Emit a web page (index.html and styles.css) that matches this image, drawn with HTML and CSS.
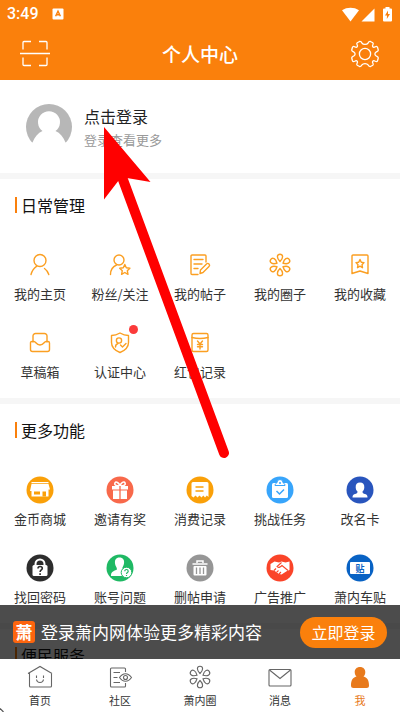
FILE: index.html
```html
<!DOCTYPE html>
<html lang="zh-CN">
<head>
<meta charset="utf-8">
<meta name="viewport" content="width=device-width, initial-scale=1">
<title>个人中心</title>
<link rel="stylesheet" href="styles.css">
</head>
<body>
<svg class="defs" aria-hidden="true">
  <symbol id="flower" viewBox="-14 -14 28 28">
    <path id="petal" d="M0-3.500C-1.700-5.200-2.600-6.800-2.600-8.200A2.600 2.600 0 0 1 2.600-8.200C2.600-6.800 1.700-5.200 0-3.500Z"/>
    <use href="#petal" transform="rotate(60)"/>
    <use href="#petal" transform="rotate(120)"/>
    <use href="#petal" transform="rotate(180)"/>
    <use href="#petal" transform="rotate(240)"/>
    <use href="#petal" transform="rotate(300)"/>
  </symbol>
</svg>
<div class="app">
  <header class="top">
    <div class="status">
      <span class="clock">3:49</span>
      <svg class="badge-a" viewBox="0 0 12 12"><rect x="0.5" y="0.5" width="11" height="11" rx="1" fill="#fff"/><path d="M3.6 8.3 6 3.2 8.4 8.3M4.5 6.8H7.5" fill="none" stroke="#fa800c" stroke-width="1.4"/></svg>
      <svg class="signals" viewBox="0 0 52 18">
        <path d="M1 5.300C6 2 13 2 18 5.300L9.500 16.500Z" fill="#fff"/>
        <path d="M33.500 3.500V16.500H20.500Z" fill="#fff"/>
        <path d="M44.500 3.500V2H48.500V3.500H50A1 1 0 0 1 51 4.500V15.500A1 1 0 0 1 50 16.500H43A1 1 0 0 1 42 15.500V4.500A1 1 0 0 1 43 3.500Z" fill="#fff"/>
        <path d="M47 5.500 44 10.500H46L45.800 14 49 9H47Z" fill="#fa800c"/>
      </svg>
    </div>
    <div class="bar">
      <button class="icon-btn" aria-label="扫一扫"><svg viewBox="0 0 30 30"><path d="M3 11V4A1 1 0 0 1 4 3H11M19 3H26A1 1 0 0 1 27 4V11M27 19V26A1 1 0 0 1 26 27H19M11 27H4A1 1 0 0 1 3 26V19M0 15H30" transform="translate(0 -.5)"/></svg></button>
      <h1>个人中心</h1>
      <button class="icon-btn" aria-label="设置"><svg viewBox="-15 -15 30 30"><circle r="5.600"/><path d="M-3-10.800C-3.500-12-4-12.800-5.500-12.500L-7.800-11.300C-9-10.300-7.600-9.300-7.500-8.200C-7.500-7-8-6.500-9.500-6.900C-11-7.600-12-8.200-12.600-6.500L-13.300-3.900C-13.300-2.500-12-2.600-10.900-1.800C-9.600-.8-9.600.8-10.900 1.800C-12 2.600-13.300 2.500-13.300 3.900L-12.600 6.500C-12 8.200-11 7.600-9.500 6.900C-8 6.500-7.500 7-7.500 8.200C-7.600 9.300-9 10.300-7.800 11.300L-5.500 12.500C-4 12.800-3.500 12-3 10.800C-2 9.200 2 9.200 3 10.800C3.500 12 4 12.800 5.500 12.500L7.800 11.300C9 10.300 7.600 9.300 7.500 8.200C7.500 7 8 6.500 9.500 6.900C11 7.600 12 8.200 12.600 6.500L13.300 3.900C13.300 2.500 12 2.600 10.900 1.800C9.600.8 9.600-.8 10.900-1.800C12-2.600 13.300-2.500 13.300-3.900L12.600-6.500C12-8.200 11-7.600 9.500-6.900C8-6.500 7.500-7 7.500-8.200C7.600-9.300 9-10.300 7.800-11.300L5.500-12.500C4-12.800 3.500-12 3-10.800C2-9.200-2-9.200-3-10.800Z"/></svg></button>
    </div>
  </header>

  <main>
    <a class="profile" href="#login">
      <svg class="avatar" viewBox="0 0 46 46"><circle cx="23" cy="23" r="23" fill="#b7b7b7"/><path d="M0 46V38.500H6.500C8.500 33 12 29 16.500 27A11 11 0 1 1 29.500 27C34 29 37.500 33 39.500 38.500H46V46Z" fill="#fff"/></svg>
      <span class="who"><span class="name">点击登录</span><span class="hint">登录查看更多</span></span>
    </a>

    <section>
      <h2>日常管理</h2>
      <nav class="grid line">
        <a href="#home"><svg viewBox="0 0 28 28"><circle cx="14" cy="9.500" r="6"/><path d="M5 23.500C6 19.500 8 17 10.500 15.300M18.500 17.500C20.700 19 22 21 22.800 23.500"/></svg>我的主页</a>
        <a href="#fans"><svg viewBox="0 0 28 28"><circle cx="13" cy="9" r="5"/><path d="M4.500 23.500C4.500 19 7 15.500 10.500 14M18.800 13.500 20.300 16.800 23.900 17.200 21.300 19.700 22 23.300 18.800 21.500 15.600 23.300 16.300 19.700 13.700 17.200 17.300 16.800Z"/></svg>粉丝/关注</a>
        <a href="#posts"><svg viewBox="0 0 28 28"><path d="M12 23.500H6A1 1 0 0 1 5 22.500V5A1 1 0 0 1 6 4H19A1 1 0 0 1 20 5V11M8 8.500H17M8 13H16M8 17.500H12M14 22.500 14.500 19 20.500 13A1.500 1.500 0 0 1 23 15.500L17 21.500Z"/></svg>我的帖子</a>
        <a href="#circle"><svg><use href="#flower"/></svg>我的圈子</a>
        <a href="#saved"><svg viewBox="0 0 28 28"><path d="M7 4H21A1 1 0 0 1 22 5V22.500L14 20 6 22.500V5A1 1 0 0 1 7 4ZM14 8.500 15.300 11.300 18 11.600 16 13.700 16.500 16.700 14 15.200 11.500 16.700 12 13.700 10 11.600 12.700 11.300Z"/></svg>我的收藏</a>
        <a href="#drafts"><svg viewBox="0 0 28 28"><path d="M7 13V7A2.500 2.500 0 0 1 9.500 4.500H18.500A2.500 2.500 0 0 1 21 7V13M4.500 13.500Q4.500 12.500 6 12.500H8C10 12.500 10 16 14 16S18 12.500 20 12.500H22Q23.500 12.500 23.500 14V20.500A2 2 0 0 1 21.500 22.500H6.500A2 2 0 0 1 4.500 20.500Z"/></svg>草稿箱</a>
        <a href="#verify"><svg viewBox="0 0 28 28"><path d="M14 4C16.500 5.500 19 6.500 22.500 6.500V13.500C22.500 18 19 21.500 14 23.500C9 21.500 5.500 18 5.500 13.500V6.500C9 6.500 11.500 5.500 14 4Z"/><circle cx="13" cy="11.500" r="2.600"/><path d="M9.500 18C9.500 16.200 10.500 15 12 14.500M14.500 16 16.500 18 20 14.500"/></svg><i class="dot"></i>认证中心</a>
        <a href="#redpack"><svg viewBox="0 0 28 28"><rect x="6" y="4.500" width="16" height="18" rx="1.500"/><path d="M6 8.500Q14 10.500 22 8.500M11.500 12 14 15 16.500 12M14 15V20M11.500 15.500H16.500M11.500 17.800H16.500"/></svg>红包记录</a>
      </nav>
    </section>

    <section>
      <h2>更多功能</h2>
      <nav class="grid">
        <a href="#shop"><svg viewBox="0 0 28 28"><circle cx="14" cy="14" r="13.500" fill="#faa009"/><path d="M5.500 6H22.500V7.200H5.500ZM5.500 8H22.500L24 13.500H22.500V20.500H5.500V15H4Z" fill="#fff"/><path d="M8 15.500H14V18.500H8ZM16.500 15.500H20V20.500H16.500Z" fill="#faa009"/></svg>金币商城</a>
        <a href="#invite"><svg viewBox="0 0 28 28"><circle cx="14" cy="14" r="13.500" fill="#f8694b"/><path d="M6 10H22V13.500H6ZM7 14.500H21V23H7Z" fill="#fff"/><path d="M14 10C9.500 10 8 8.500 9 6.800S13 6.500 14 10C15 6.500 18 5 19 6.800S18.500 10 14 10" fill="none" stroke="#fff" stroke-width="1.600"/><path d="M14 10V23" stroke="#f8694b" stroke-width="1.300"/></svg>邀请有奖</a>
        <a href="#spend"><svg viewBox="0 0 28 28"><circle cx="14" cy="14" r="13.500" fill="#faa009"/><path d="M7 6H21A1.500 1.500 0 0 1 22.500 7.500V21L20.800 19.500 19 21.500 17.300 19.500 15.500 21.500 13.500 19.500 11.500 21.500 9.500 19.500 7.500 21.500 5.500 20V7.500A1.500 1.500 0 0 1 7 6Z" fill="#fff"/><path d="M9.500 11H17.500M9.500 15H17.500" stroke="#faa009" stroke-width="1.500"/></svg>消费记录</a>
        <a href="#task"><svg viewBox="0 0 28 28"><circle cx="14" cy="14" r="13.500" fill="#38a5fb"/><path d="M7.500 7H20.500A1.500 1.500 0 0 1 22 8.500V20.500A1.500 1.500 0 0 1 20.500 22H7.500A1.500 1.500 0 0 1 6 20.500V8.500A1.500 1.500 0 0 1 7.500 7Z" fill="#fff"/><path d="M9 9.500C9 7 11 7.200 11 6.500A3 3 0 0 1 17 6.500C17 7.200 19 7 19 9.500Z" fill="#fff" stroke="#38a5fb"/><circle cx="14" cy="7" r="1" fill="#38a5fb"/><path d="M10.500 15 13.500 18 18 13.500" fill="none" stroke="#38a5fb" stroke-width="1.500"/></svg>挑战任务</a>
        <a href="#rename"><svg viewBox="0 0 28 28"><circle cx="14" cy="14" r="13.500" fill="#2955bd"/><path d="M14 6.500C17 6.500 18.500 8 18.300 11.500C18.200 13.500 17.500 14.500 16.500 15.500C16.500 17.500 17.500 17.500 19 18C21 18.700 21.500 19.500 21.500 21.500H6.500C6.500 19.500 7 18.700 9 18C10.500 17.500 11.500 17.500 11.500 15.500C10.500 14.500 9.800 13.500 9.700 11.500C9.500 8 11 6.500 14 6.500Z" fill="#fff"/></svg>改名卡</a>
        <a href="#password"><svg viewBox="0 0 28 28"><circle cx="14" cy="14" r="13.500" fill="#2d2d2d"/><path d="M9.500 12V10A4.500 4.500 0 0 1 18.500 10V12" fill="none" stroke="#fff" stroke-width="2"/><rect x="6.500" y="11" width="15" height="11" rx="1.500" fill="#fff"/><path d="M12 14.500C12 11.800 16.300 12 16.300 14.300C16.300 16 14.100 15.800 14.100 18M14.100 19.300V21" fill="none" stroke="#2d2d2d" stroke-width="1.600"/></svg>找回密码</a>
        <a href="#account"><svg viewBox="0 0 28 28"><circle cx="14" cy="14" r="13.500" fill="#1fb964"/><path d="M13.500 3.500C17 3.500 18.500 6 18 9.500C17.700 12 16.500 12.500 16.300 14.500L20 16.500V22H5C5 18 6.500 17.500 11 15.500C10.800 13 9.300 12 9 9.500C8.500 6 10 3.500 13.500 3.500Z" fill="#fff"/><circle cx="20.500" cy="18.500" r="5.300" fill="#fff" stroke="#1fb964"/><path d="M18.800 17.300C18.800 14.800 22.200 15 22.200 17.200C22.200 18.500 20.500 18.500 20.500 20M20.500 21V22" fill="none" stroke="#1fb964" stroke-width="1.200"/></svg>账号问题</a>
        <a href="#delete"><svg viewBox="0 0 28 28"><circle cx="14" cy="14" r="13.500" fill="#969696"/><path d="M11 9V7H17V9M6.500 10H21.500" fill="none" stroke="#fff" stroke-width="1.500"/><rect x="7.500" y="12" width="13" height="9.500" rx="1" fill="#fff"/><path d="M10.500 13.500V20M14 13.500V20M17.500 13.500V20" stroke="#969696" stroke-width="1.300"/></svg>删帖申请</a>
        <a href="#ads"><svg viewBox="0 0 28 28"><circle cx="14" cy="14" r="13.500" fill="#fa4429"/><path d="M4.500 10 8.500 7.500 13 8.500 15.500 7.500 19.500 8.500 23.500 7.500V16L21 17 15.500 20.500 13 20 8 16.500 4.500 16Z" fill="#fff"/><path d="M15.500 8.500 11 12.500C12.500 14.500 15 12.500 16 11.500L22 16.500M8 16.500 10 14.500M10.500 18.300 12.500 16.500M13 20 15 18" fill="none" stroke="#fa4429" stroke-width="1.100"/></svg>广告推广</a>
        <a href="#sticker"><svg viewBox="0 0 28 28"><circle cx="14" cy="14" r="13.500" fill="#0862c4"/><rect x="4" y="8" width="20" height="12" rx="1" fill="#fff"/><text class="glyph" x="14" y="17.500" text-anchor="middle">贴</text></svg>萧内车贴</a>
      </nav>
    </section>

    <section>
      <h2>便民服务</h2>
    </section>
  </main>

  <footer>
    <div class="login">
      <span class="logo">萧</span>
      <span class="pitch">登录萧内网体验更多精彩内容</span>
      <button class="go">立即登录</button>
    </div>
    <nav class="tabs">
      <a href="#index"><svg viewBox="0 0 28 24"><path d="M2 8.500 14 1.500 26 8.500M3.500 8V21A1 1 0 0 0 4.500 22H24.500A1 1 0 0 0 25.500 21V8M10.500 10.500V13M17.500 10.500V13M10.500 14.500C11 18.500 17 18.500 17.500 14.500"/></svg>首页</a>
      <a href="#community"><svg viewBox="0 0 28 24"><path d="M19.500 7V4A1 1 0 0 0 18.500 3H5.500A1 1 0 0 0 4.500 4V21A1 1 0 0 0 5.500 22H18.500A1 1 0 0 0 19.500 21V18M7.500 7.500H14M7.500 12.500H11.500M7.500 17.500H14M13.500 12.500C17 7.500 22 7.500 25.500 12.500C22 17.500 17 17.500 13.500 12.500Z"/><circle cx="19.500" cy="12.500" r="2"/></svg>社区</a>
      <a href="#circles"><svg><use href="#flower" x="0" y="-2" width="28" height="28"/></svg>萧内圈</a>
      <a href="#messages"><svg viewBox="0 0 28 24"><rect x="3" y="4.500" width="22" height="16.500" rx="1"/><path d="M3.500 5 14 13.500 24.500 5"/></svg>消息</a>
      <a class="on" href="#me" aria-current="page"><svg viewBox="0 0 28 24"><path d="M14 2C17.300 2 19.300 4.200 19.300 7C19.300 9 18.500 10.500 17.500 11.500C21.500 12.500 23 15.500 23 20.500Q23 23 20.500 23H7.500Q5 23 5 20.500C5 15.500 6.500 12.500 10.500 11.500C9.500 10.500 8.700 9 8.700 7C8.700 4.200 10.700 2 14 2Z"/></svg>我</a>
    </nav>
  </footer>

  <svg class="arrow" viewBox="0 0 126 332" aria-hidden="true"><path d="M4 0 50.500 55 27 51 19 53 4 72.500Z" fill="red"/><path d="M22 50 124 326" stroke="red" stroke-width="10" stroke-linecap="round"/></svg>
  <svg class="corner" viewBox="0 0 4 4" aria-hidden="true"><path d="M0 .5 3.500 4" stroke="#555" stroke-width="1.200"/></svg>
</div>
</body>
</html>
```
FILE: styles.css
```css
* { box-sizing: border-box; }

body {
  margin: 0;
  background: #fff;
  color: #333;
  font-family: "Noto Sans CJK SC", sans-serif;
  font-size: 13px;
}

a { color: inherit; text-decoration: none; }
button { border: 0; padding: 0; background: none; font: inherit; color: inherit; }
h1, h2 { margin: 0; font-weight: 400; }
svg { display: block; overflow: visible; }
.defs { position: absolute; width: 0; height: 0; }

.app {
  position: relative;
  height: 100vh;
  overflow: hidden;
}

.top { background: #fa800c; color: #fff; }

.status {
  display: flex;
  align-items: center;
  height: 28px;
  padding: 0 7px;
}
.clock { font: 500 16px/28px Roboto, sans-serif; }
.badge-a { width: 12px; height: 12px; margin-left: 13px; }
.signals { width: 52px; height: 18px; margin-left: auto; }

.bar {
  display: flex;
  align-items: center;
  justify-content: space-between;
  height: 52px;
  padding: 0 20px;
}
.bar h1 { font-size: 19px; line-height: 28px; font-weight: 500; }
.icon-btn svg {
  width: 30px;
  height: 30px;
  fill: none;
  stroke: #fff;
  stroke-width: 1.3;
}

.profile {
  display: flex;
  align-items: center;
  gap: 12px;
  height: 93px;
  padding: 0 26px;
}
.avatar { width: 46px; height: 46px; }
.who { display: flex; flex-direction: column; }
.name { font-size: 16px; line-height: 26px; color: #222; }
.hint { line-height: 22px; color: #999; }

section {
  border-top: 6px solid #f6f6f6;
  padding: 14px 0 16px;
}
h2 {
  display: flex;
  align-items: center;
  gap: 4px;
  padding-left: 15px;
  font-size: 16px;
  line-height: 24px;
  color: #111;
}
h2::before {
  content: "";
  width: 2px;
  height: 16px;
  background: #fa800c;
}

.grid {
  display: grid;
  grid-template-columns: repeat(5, 1fr);
  row-gap: 25px;
  margin-top: 34px;
}
.grid a {
  position: relative;
  display: flex;
  flex-direction: column;
  align-items: center;
  gap: 5px;
  line-height: 20px;
}
.grid svg { width: 28px; height: 28px; }
.line svg {
  fill: none;
  stroke: #fb9f22;
  stroke-width: 1.4;
  stroke-linecap: round;
  stroke-linejoin: round;
}
.dot {
  position: absolute;
  top: -4px;
  left: calc(50% + 9px);
  width: 9px;
  height: 9px;
  border-radius: 50%;
  background: #fb3a3a;
}
.glyph { font-size: 9px; font-weight: 700; fill: #0862c4; }

footer {
  position: absolute;
  left: 0;
  right: 0;
  bottom: 0;
}
.login {
  display: flex;
  align-items: center;
  gap: 6px;
  height: 54px;
  padding: 0 13px;
  background: rgba(0, 0, 0, 0.7);
  color: #fff;
}
.logo {
  width: 22px;
  height: 22px;
  border-radius: 3px;
  background: #fd650e;
  font-size: 17px;
  font-weight: 700;
  line-height: 22px;
  text-align: center;
}
.pitch { font-size: 17px; line-height: 24px; white-space: nowrap; }
.go {
  width: 87px;
  height: 31px;
  margin-left: auto;
  border-radius: 16px;
  background: #fa800c;
  font-size: 16px;
}

.tabs {
  display: grid;
  grid-template-columns: repeat(5, 1fr);
  height: 53px;
  padding-top: 6px;
  background: #fff;
}
.tabs a {
  display: flex;
  flex-direction: column;
  align-items: center;
  gap: 3px;
  font-size: 11px;
  line-height: 16px;
}
.tabs svg {
  width: 28px;
  height: 24px;
  fill: none;
  stroke: #666;
  stroke-width: 1.1;
}
.tabs .on { color: #e87a1c; }
.tabs .on svg { fill: #e87a1c; stroke: none; }

.arrow {
  position: absolute;
  top: 127px;
  left: 100px;
  width: 126px;
  height: 332px;
}
.corner {
  position: absolute;
  bottom: 0;
  left: 0;
  width: 4px;
  height: 4px;
}
```
